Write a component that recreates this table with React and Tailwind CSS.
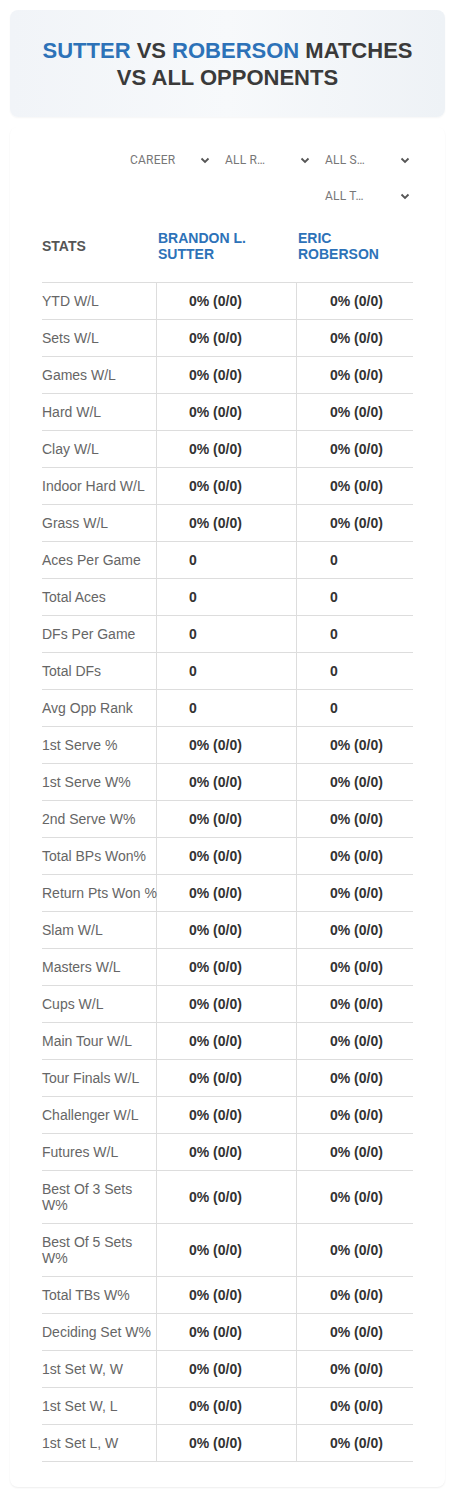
import React from 'react';

const pct = '0% (0/0)';

const rows = [
    ['YTD W/L', pct],
    ['Sets W/L', pct],
    ['Games W/L', pct],
    ['Hard W/L', pct],
    ['Clay W/L', pct],
    ['Indoor Hard W/L', pct],
    ['Grass W/L', pct],
    ['Aces Per Game', '0'],
    ['Total Aces', '0'],
    ['DFs Per Game', '0'],
    ['Total DFs', '0'],
    ['Avg Opp Rank', '0'],
    ['1st Serve %', pct],
    ['1st Serve W%', pct],
    ['2nd Serve W%', pct],
    ['Total BPs Won%', pct],
    ['Return Pts Won %', pct, true],
    ['Slam W/L', pct],
    ['Masters W/L', pct],
    ['Cups W/L', pct],
    ['Main Tour W/L', pct],
    ['Tour Finals W/L', pct],
    ['Challenger W/L', pct],
    ['Futures W/L', pct],
    ['Best Of 3 Sets W%', pct],
    ['Best Of 5 Sets W%', pct],
    ['Total TBs W%', pct],
    ['Deciding Set W%', pct],
    ['1st Set W, W', pct],
    ['1st Set W, L', pct],
    ['1st Set L, W', pct],
];

function Chevron() {
    return (
        <svg width="10" height="7" viewBox="0 0 10 7" className="text-[#555]">
            <path d="M1.5 1.5 L5 5 L8.5 1.5" fill="none" stroke="currentColor" strokeWidth="1.8" />
        </svg>
    );
}

function Select({ label, first }) {
    return (
        <div className={`w-[100px] h-[36px] flex items-center justify-between pr-[5px] ${first ? 'pl-[15px]' : 'pl-[10px]'}`}>
            <span className="text-[12px] text-[#777] tracking-[0.2px]">{label}</span>
            <Chevron />
        </div>
    );
}

export default function App() {
    return (
        <div className="w-[455px] min-h-[1496px] bg-white p-[10px] [font-family:'Liberation_Sans',Arial,sans-serif]">

            {/* title card */}
            <div className="h-[107px] rounded-[8px] bg-gradient-to-r from-[#f1f4f8] via-[#f7f9fb] to-[#eef2f6] shadow-[0_1px_2px_rgba(0,0,0,0.04)] flex items-center justify-center">
                <h1 className="text-[22px] leading-[27px] font-bold text-[#3a3a3a] text-center uppercase">
                    <span className="text-[#2d72b8]">Sutter</span> vs <span className="text-[#2d72b8]">Roberson</span> matches
                    <br />
                    vs all opponents
                </h1>
            </div>

            {/* stats card */}
            <div className="mt-[10px] rounded-[8px] bg-white shadow-[0_1px_2px_rgba(0,0,0,0.07)] px-[32px] pt-[15px] pb-[25px]">

                <div className="flex flex-wrap justify-end [font-family:Roboto,sans-serif] -mr-[2px]">
                    <Select label="CAREER" first />
                    <Select label="ALL R…" />
                    <Select label="ALL S…" />
                    <Select label="ALL T…" />
                </div>

                <div className="mt-[16px] pb-[20px] flex items-center">
                    <div className="w-[116px] text-[14px] font-bold text-[#555]">STATS</div>
                    <div className="w-[140px] text-[14px] leading-[16px] font-bold text-[#2d72b8]">BRANDON L.<br />SUTTER</div>
                    <div className="flex-1 text-[14px] leading-[16px] font-bold text-[#2d72b8]">ERIC<br />ROBERSON</div>
                </div>

                <div className="border-t border-[#dddddd]">
                    {rows.map(([label, val, nowrap]) => (
                        <div key={label} className="flex border-b border-[#dddddd] text-[14px] leading-[16px]">
                            <div className={`w-[115px] py-[10px] text-[#666] border-r border-[#dddddd] ${nowrap ? 'whitespace-nowrap' : ''}`}>{label}</div>
                            <div className="w-[140px] py-[10px] pl-[32px] flex items-center font-bold text-[#333] border-r border-[#dddddd]">{val}</div>
                            <div className="flex-1 py-[10px] pl-[33px] flex items-center font-bold text-[#333]">{val}</div>
                        </div>
                    ))}
                </div>

            </div>

        </div>
    );
}
